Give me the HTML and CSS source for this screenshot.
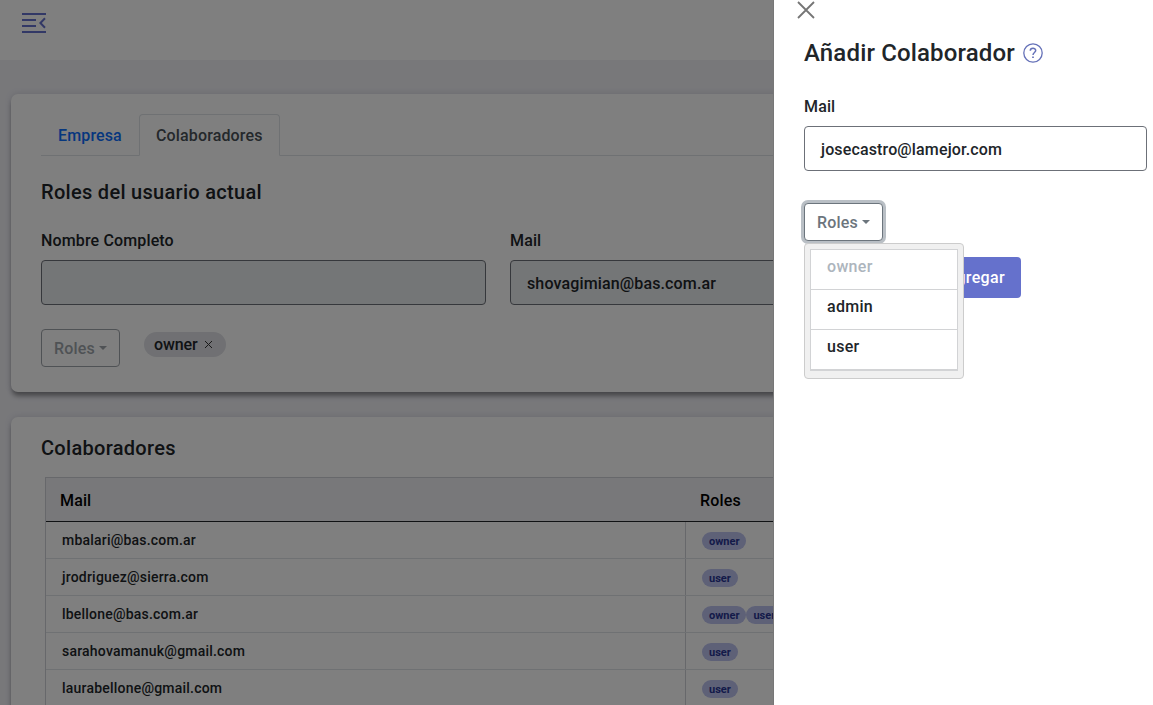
FILE: index.html
```html
<!DOCTYPE html>
<html lang="es">
<head>
<meta charset="utf-8">
<title>Colaboradores</title>
<link rel="stylesheet" href="styles.css">
</head>
<body>
<div class="page">
  <header class="topbar">
    <svg class="menu-icon" width="24" height="20" viewBox="0 0 24 20" fill="none" stroke="#6571cc" stroke-width="2"><path d="M0 1H24M0 7H14M0 13H14M0 19H24M23 5.3L18.4 10L23 14.7"/></svg>
  </header>
  <main class="content">
    <section class="card card-user">
      <nav class="tabs"><a class="tab link">Empresa</a><a class="tab active">Colaboradores</a></nav>
      <h2 class="title">Roles del usuario actual</h2>
      <div class="fields">
        <div class="field"><label>Nombre Completo</label><div class="input disabled"></div></div>
        <div class="field"><label>Mail</label><div class="input disabled">shovagimian@bas.com.ar</div></div>
      </div>
      <div class="roles-row">
        <button class="roles-btn off">Roles<i class="caret"></i></button>
        <span class="chip">owner<svg width="9" height="9" viewBox="0 0 9 9" stroke="#333" stroke-width="1"><path d="M1 1L8 8M8 1L1 8"/></svg></span>
      </div>
    </section>
    <section class="card card-list">
      <h2 class="title">Colaboradores</h2>
      <div class="table">
        <div class="thead"><div class="c1">Mail</div><div class="c2">Roles</div></div>
        <div class="tr"><div class="c1">mbalari@bas.com.ar</div><div class="c2"><b class="badge">owner</b></div></div>
        <div class="tr"><div class="c1">jrodriguez@sierra.com</div><div class="c2"><b class="badge">user</b></div></div>
        <div class="tr"><div class="c1">lbellone@bas.com.ar</div><div class="c2"><b class="badge">owner</b><b class="badge">user</b></div></div>
        <div class="tr"><div class="c1">sarahovamanuk@gmail.com</div><div class="c2"><b class="badge">user</b></div></div>
        <div class="tr"><div class="c1">laurabellone@gmail.com</div><div class="c2"><b class="badge">user</b></div></div>
      </div>
    </section>
  </main>
</div>
<div class="overlay"></div>
<aside class="drawer">
  <svg class="close" width="18" height="18" viewBox="0 0 18 18" stroke="#757575" stroke-width="1.8"><path d="M1 1L17 17M17 1L1 17"/></svg>
  <h1 class="heading">Añadir Colaborador
    <svg width="20" height="20" viewBox="0 0 20 20" fill="none" stroke="#6571b8" stroke-width="1.3"><circle cx="10" cy="10" r="9.2"/><path d="M7.3 7.7C7.3 4.5 12.7 4.5 12.7 7.6C12.7 9.5 10 9.5 10 11.9" stroke-width="1.5"/><path d="M10 13.4V15" stroke-width="1.7"/></svg></h1>
  <label class="mail-label">Mail</label>
  <div class="input">josecastro@lamejor.com</div>
  <div class="dropdown">
    <button class="roles-btn focus">Roles<i class="caret"></i></button>
    <ul class="menu"><li class="muted">owner</li><li>admin</li><li>user</li></ul>
  </div>
  <button class="add-btn">Agregar</button>
</aside>
</body>
</html>
```
FILE: styles.css
```css
* { box-sizing: border-box; }
html, body { margin: 0; height: 100%; overflow: hidden; }
body { font-family: Roboto, "Open Sans", sans-serif; font-size: 16px; font-weight: 500; letter-spacing: .14px; color: #212529; background: #f0f0f5; }
h1, h2 { margin: 0; font-weight: 500; }
button { font: inherit; letter-spacing: inherit; }
.page { height: 705px; overflow: hidden; }
.topbar { height: 60px; background: #fff; padding: 13px 22px; }
.menu-icon { display: block; }
.content { padding: 34px 11px 0; display: flex; flex-direction: column; gap: 25px; }
.card { background: #fff; border-radius: 7px; padding: 20px 30px 0; box-shadow: 0 5px 5px -1px rgba(0,0,0,.38), 0 0 6px rgba(90,90,130,.2); }
.card-user { height: 298px; }
.card-list { height: 400px; }
.tabs { display: flex; height: 42px; border-bottom: 1px solid #dee2e6; }
.tab { width: 98px; height: 42px; padding: 0 16px; line-height: 42px; border: 1px solid transparent; }
.link { color: #0d6efd; }
.active { width: 141px; color: #495057; background: #fff; border-color: #dee2e6 #dee2e6 #fff; border-radius: 4px 4px 0 0; }
.title { font-size: 20px; line-height: 24px; letter-spacing: .3px; }
.card-user .title { margin-top: 24px; }
.fields { display: flex; gap: 24px; margin-top: 25px; }
.field { width: 445px; }
label { display: block; line-height: 24px; margin-bottom: 7px; }
.input { height: 45px; border: 1px solid #6c7078; border-radius: 4px; padding: 0 16px; line-height: 45px; }
.disabled { background: #e9ecef; }
.roles-row { display: flex; gap: 24px; margin-top: 24px; }
.roles-btn { display: flex; align-items: center; gap: 4px; width: 79px; height: 38px; padding: 0 0 0 12px; border: 1px solid #6c757d; border-radius: 4px; color: #6c757d; background: #fff; letter-spacing: .2px; }
.caret { border: 4.5px solid transparent; border-top-color: currentColor; border-bottom: 0; }
.off { opacity: .65; }
.chip { display: flex; align-items: center; justify-content: space-between; width: 82px; height: 25px; margin-top: 3px; padding: 0 13px 0 10px; border-radius: 13px; background: #e0e1e6; letter-spacing: -.1px; }
.card-list .title { margin: -1px 0 17px; }
.table { margin: 0 4px; border: 1px solid #ced1d6; border-bottom: 0; }
.thead, .tr { display: flex; }
.thead { height: 44px; line-height: 46px; background: #f0f0f5; border-bottom: 1px solid #212529; color: #000; }
.thead .c1 { width: 640px; padding-left: 14px; }
.thead .c2 { padding-left: 14px; letter-spacing: .2px; }
.tr { height: 37px; line-height: 36px; font-size: 14px; letter-spacing: .21px; border-bottom: 1px solid #dee2e6; }
.tr .c1 { width: 640px; padding-left: 16px; border-right: 1px solid #ced1d6; }
.tr .c2 { display: flex; align-items: center; padding: 2px 0 0 16px; }
.badge { height: 18px; line-height: 19px; padding: 0 7px; border-radius: 9px; background: #bcc2ef; color: #283593; font-size: 11px; font-weight: 700; letter-spacing: 0; }
.overlay { position: fixed; inset: 0; background: rgba(0,0,0,.5); }
.drawer { position: fixed; top: 0; right: 0; bottom: 0; width: 380px; background: #fff; border-left: 1px solid #777; padding: 0 6px 0 30px; }
.close { display: block; margin: 1px 0 0 -7px; }
.heading { display: flex; align-items: center; gap: 8px; margin-top: 19px; height: 30px; font-size: 24px; letter-spacing: .15px; }
.mail-label { margin-top: 27px; }
.dropdown { position: relative; margin-top: 32px; }
.focus { box-shadow: 0 0 0 3px #b9bfc5; }
.menu { position: absolute; left: 0; top: 40px; width: 160px; height: 136px; margin: 0; padding: 5px; list-style: none; background: #f0f0f0; border: 1px solid #ccc; border-radius: 4px; letter-spacing: .3px; }
.menu li { height: 40px; padding: 0 16px; line-height: 34px; background: #fff; border: 1px solid #d2d3d5; border-bottom: 0; }
.menu li:last-child { height: 42px; border-bottom: 2px solid #d2d3d5; }
.menu .muted { color: #adb5bd; }
.add-btn { display: block; margin-top: 16px; margin-left: 112px; width: 105px; height: 41px; padding: 0 16px; text-align: right; letter-spacing: .35px; border: 0; border-radius: 4px; color: #fff; background: #6571cc; }
```
